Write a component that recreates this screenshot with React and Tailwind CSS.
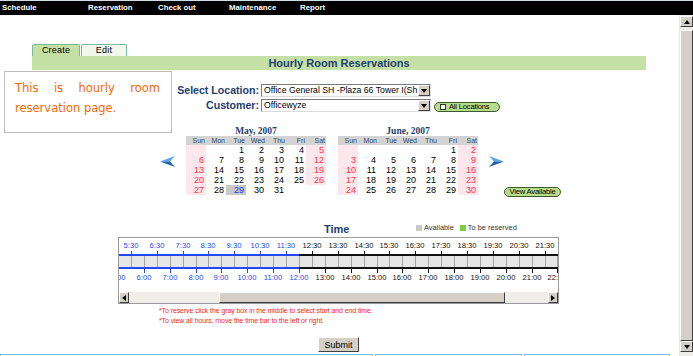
import React from "react";

const DAYS = ["Sun", "Mon", "Tue", "Wed", "Thu", "Fri", "Sat"];

const MAY = [
  ["", "", 1, 2, 3, 4, 5],
  [6, 7, 8, 9, 10, 11, 12],
  [13, 14, 15, 16, 17, 18, 19],
  [20, 21, 22, 23, 24, 25, 26],
  [27, 28, 29, 30, 31],
];

const JUNE = [
  ["", "", "", "", "", 1, 2],
  [3, 4, 5, 6, 7, 8, 9],
  [10, 11, 12, 13, 14, 15, 16],
  [17, 18, 19, 20, 21, 22, 23],
  [24, 25, 26, 27, 28, 29, 30],
];

function Tri({ dir }) {
  const pts = {
    up: "0,4 3,0 6,4",
    down: "0,0 6,0 3,4",
    left: "4,0 4,6 0,3",
    right: "0,0 0,6 4,3",
  }[dir];
  const w = dir === "left" || dir === "right" ? 4 : 6;
  const h = dir === "left" || dir === "right" ? 6 : 4;
  return (
    <svg width={w} height={h} className="block">
      <polygon points={pts} fill="#000" />
    </svg>
  );
}

function ScrollBtn({ dir, className }) {
  return (
    <div
      className={
        "flex items-center justify-center border border-t-white border-l-white border-b-[#404040] border-r-[#404040] bg-[#d4d0c8] " +
        className
      }
    >
      <Tri dir={dir} />
    </div>
  );
}

function Combo({ value }) {
  return (
    <div className="flex h-[13px] w-[170px] border border-t-[#7b7b7b] border-l-[#7b7b7b] border-b-[#dcdcdc] border-r-[#dcdcdc] bg-white">
      <span className="flex-1 overflow-hidden whitespace-nowrap pl-[2px] text-[8.7px] leading-[11px] text-black">
        {value}
      </span>
      <ScrollBtn dir="down" className="w-[12px]" />
    </div>
  );
}

function PillButton({ children, className }) {
  return (
    <div
      className={
        "flex h-[10px] items-center rounded-[5px] border border-[#3d5a2c] bg-[#b6dc8c] text-[7.6px] leading-[8px] tracking-[-0.2px] text-black " +
        className
      }
    >
      {children}
    </div>
  );
}

function Arrow({ flip }) {
  return (
    <svg width="15" height="11" className={"block " + (flip ? "-scale-x-100" : "")}>
      <polygon points="0,5.5 15,0 10,5.5" fill="#5aa6e6" />
      <polygon points="0,5.5 10,5.5 15,11" fill="#1f5fb0" />
    </svg>
  );
}

function Calendar({ title, weeks, selected }) {
  return (
    <div className="w-[140px]">
      <div className="h-[9px] text-center font-['Liberation_Serif',serif] text-[9.5px] font-bold leading-[9px] text-[#1d3e73]">
        {title}
      </div>
      <div className="grid h-[9px] grid-cols-7 bg-[#d3d3d3] text-[7px] leading-[9px] text-[#2d4a6b]">
        {DAYS.map((d) => (
          <span key={d} className="pr-px text-right">
            {d}
          </span>
        ))}
      </div>
      {weeks.map((row, r) => (
        <div key={r} className="grid h-[10px] grid-cols-7 text-[9px] leading-[10px]">
          {row.map((d, i) => {
            const weekend = i === 0 || i === 6;
            let cls = "pr-[2px] text-right text-black";
            if (weekend) cls = "pr-[2px] text-right bg-[#fde6ec] text-[#ff3344]";
            if (d === selected) cls = "pr-[2px] text-right bg-[#c8c8c8] text-[#1936ff]";
            return (
              <span key={i} className={cls}>
                {d}
              </span>
            );
          })}
        </div>
      ))}
    </div>
  );
}

function Ruler() {
  const px = (h) => Math.round((h - 5) * 25.85 - 1);
  const halves = [];
  for (let h = 5.5; h <= 22.5; h += 0.5) halves.push(h);
  const hours = [];
  for (let h = 5; h <= 22; h += 1) hours.push(h);
  const noon = px(12);
  const blue = "#2347f5";
  return (
    <svg width="439" height="54" className="block" shapeRendering="crispEdges">
      <rect x="0" y="18" width="439" height="11" fill="#e6e6e6" />
      {halves.map((h) => (
        <rect key={h} x={px(h)} y="18" width="1" height="11" fill="#a4a4a4" />
      ))}
      <rect x="0" y="16" width={noon} height="2" fill={blue} />
      <rect x={noon} y="16" width={439 - noon} height="2" fill="#111" />
      <rect x="0" y="29" width={noon} height="2" fill={blue} />
      <rect x={noon} y="29" width={439 - noon} height="2" fill="#111" />
      {hours.map((h) => (
        <g key={h}>
          {h < 22 && (
            <>
              <rect x={px(h + 0.5)} y="13" width="1" height="3" fill={h + 0.5 < 12 ? blue : "#111"} />
              <text
                x={px(h + 0.5)}
                y="9.5"
                textAnchor="middle"
                fontSize="7.6"
                fill={h + 0.5 < 12 ? blue : "#111"}
                shapeRendering="auto"
              >
                {h}:30
              </text>
            </>
          )}
          <rect x={px(h)} y="31" width="1" height="4" fill={h <= 12 ? blue : "#111"} />
          <text
            x={px(h)}
            y="41.5"
            textAnchor="middle"
            fontSize="7.6"
            fill={h <= 12 ? blue : "#111"}
            shapeRendering="auto"
          >
            {h}:00
          </text>
        </g>
      ))}
    </svg>
  );
}

export default function App() {
  return (
    <div className="relative h-[356px] w-[693px] overflow-hidden bg-white font-['Liberation_Sans',Arial,sans-serif]">
      <div className="h-px bg-[#cfdde6]" />
      <div className="flex h-[14px] items-center bg-black text-[7.8px] font-bold text-white">
        <span className="w-[88px] pl-[2px]">Schedule</span>
        <span className="w-[70px]">Reservation</span>
        <span className="w-[71px]">Check out</span>
        <span className="w-[71px]">Maintenance</span>
        <span>Report</span>
      </div>

      <div className="flex h-[341px]">
        {/* page */}
        <div className="relative w-[679px]">
          {/* tabs */}
          <div className="ml-[32px] mt-[29px] flex h-[12px]">
            <div className="w-[48px] rounded-t-[2px] border border-b-0 border-[#7db89c] bg-[#c5e0a5] text-center text-[9px] leading-[11px] tracking-[0.2px] text-black">
              Create
            </div>
            <div className="ml-px w-[46px] rounded-t-[2px] border border-b-0 border-[#7db89c] bg-[#f1f7ec] text-center text-[9px] leading-[11px] tracking-[0.2px] text-black">
              Edit
            </div>
          </div>
          <div className="ml-[32px] h-[14px] w-[614px] bg-[#c5e0a4] text-center text-[11px] font-bold leading-[14px] text-[#1d3e73]">
            Hourly Room Reservations
          </div>

          {/* note callout */}
          <div className="absolute left-[4px] top-[56px] h-[62px] w-[168px] border border-[#bcbcbc] bg-white pl-[10px] pr-[11px] pt-[6px] text-justify font-['DejaVu_Sans',sans-serif] text-[11.5px] leading-[20px] text-[#ff6600]">
            This is hourly room reservation page.
          </div>

          {/* form */}
          <div className="mt-[14px] flex flex-col gap-[2px]">
            <div className="flex h-[13px] items-center">
              <span className="w-[261px] pr-[2px] text-right text-[10.6px] font-bold text-[#1d3e73]">
                Select Location:
              </span>
              <Combo value="Office General SH -Plaza 66 Tower I(Sh" />
            </div>
            <div className="flex h-[13px] items-center">
              <span className="w-[261px] pr-[2px] text-right text-[10.6px] font-bold text-[#1d3e73]">
                Customer:
              </span>
              <Combo value="Officewyze" />
              <PillButton className="ml-[3px] mt-[2px] w-[66px] pl-[5px]">
                <span className="mr-[3px] h-[6px] w-[6px] border border-[#333] bg-white" />
                All Locations
              </PillButton>
            </div>
          </div>

          {/* calendars */}
          <div className="mt-[15px] flex items-start pl-[160px]">
            <div className="mt-[29px]">
              <Arrow />
            </div>
            <div className="ml-[11px]">
              <Calendar title="May, 2007" weeks={MAY} selected={29} />
            </div>
            <div className="ml-[12px]">
              <Calendar title="June, 2007" weeks={JUNE} />
            </div>
            <div className="ml-[11px] mt-[29px]">
              <Arrow flip />
            </div>
            <PillButton className="mt-[60px] w-[57px] justify-center">View Available</PillButton>
          </div>

          {/* time header */}
          <div className="mt-[25px] flex h-[14px] items-end pl-[324px]">
            <span className="w-[92px] text-[11px] font-bold leading-[14px] text-[#1d3e73]">Time</span>
            <div className="mb-[4px] flex items-center text-[7.4px] leading-[8px] text-[#333]">
              <span className="h-[6px] w-[6px] bg-[#c8c8c8]" />
              <span className="ml-[2px]">Available</span>
              <span className="ml-[6px] h-[6px] w-[6px] bg-[#7ccc3c]" />
              <span className="ml-[2px]">To be reserved</span>
            </div>
          </div>

          {/* timeline */}
          <div className="ml-[118px] mt-px w-[441px] border border-[#9a9a9a]">
            <Ruler />
            <div className="flex h-[11px]">
              <ScrollBtn dir="left" className="w-[10px]" />
              <div className="w-[90px] bg-[#eeede8]" />
              <div className="w-[286px] border border-t-white border-l-white border-b-[#404040] border-r-[#404040] bg-[#d4d0c8]" />
              <div className="w-[43px] bg-[#eeede8]" />
              <ScrollBtn dir="right" className="w-[10px]" />
            </div>
          </div>

          {/* notes */}
          <div className="mt-[2px] pl-[159px] text-[7px] leading-[9.5px] tracking-[-0.1px] text-[#ff1a1a]">
            <p>*To reserve click the gray box in the middle to select start and end time.</p>
            <p>*To view all hours, move the time bar to the left or right.</p>
          </div>

          <div className="mt-[12px] flex pl-[318px]">
            <button className="block h-[15px] w-[41px] border border-t-white border-l-white border-b-[#404040] border-r-[#404040] bg-[#d4d0c8] text-[9px] leading-[12px] text-black">
              Submit
            </button>
          </div>

          <div className="mt-[2px] flex gap-[2px]">
            <div className="h-[10px] w-[373px] border border-[#78c0ea] bg-white" />
            <div className="h-[10px] w-[147px] border border-[#78c0ea] bg-white" />
            <div className="h-[10px] w-[146px] border border-[#78c0ea] bg-white" />
          </div>
        </div>

        {/* vertical scrollbar */}
        <div className="flex w-[14px] flex-col border-l border-[#e6e6e6] bg-[#eeede8]">
          <ScrollBtn dir="up" className="mt-px h-[11px]" />
          <div className="h-[3px]" />
          <div className="flex-1 border border-t-white border-l-white border-b-[#404040] border-r-[#404040] bg-[#d4d0c8]" />
          <ScrollBtn dir="down" className="h-[11px]" />
          <div className="h-[4px]" />
        </div>
      </div>
    </div>
  );
}
